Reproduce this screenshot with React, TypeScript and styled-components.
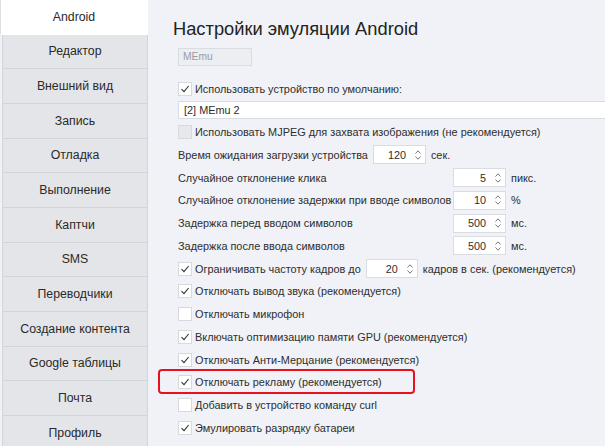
import React from "react";
import styled, { createGlobalStyle } from "styled-components";

const Global = createGlobalStyle`
  html, body { margin: 0; padding: 0; }
  body {
    background: #f0f2f7;
    font-family: "Liberation Sans", Arial, sans-serif;
    color: #2e2e2e;
    overflow: hidden;
  }
`;

const Page = styled.div`
  display: flex;
  width: 605px;
  height: 446px;
  overflow: hidden;
  background: #f0f2f7;
`;

const Sidebar = styled.div`
  width: 148px;
  flex: none;
  display: flex;
  flex-direction: column;
`;

const Tab = styled.div<{ $active?: boolean }>`
  box-sizing: border-box;
  height: 34.67px;
  flex: none;
  display: flex;
  align-items: center;
  justify-content: center;
  font-size: 12.3px;
  color: #2a2a2a;
  margin-left: ${(p) => (p.$active ? "0" : "2px")};
  background: ${(p) => (p.$active ? "#ffffff" : "#e4e5e9")};
  border: 1px solid ${(p) => (p.$active ? "#ffffff" : "#d2d5db")};
  border-left-color: ${(p) => (p.$active ? "#dcdfe4" : "#d2d5db")};
  border-top: none;
`;

const Content = styled.div`
  flex: 1;
  padding: 16px 0 0 30px;
  display: flex;
  flex-direction: column;
  font-size: 10.9px;
`;

const Title = styled.h1`
  margin: 0 0 6px -5px;
  font-weight: normal;
  font-size: 18.3px;
  line-height: 26px;
  color: #222;
`;

const DisabledInput = styled.div`
  box-sizing: border-box;
  width: 74px;
  height: 18px;
  border: 1px solid #d9dce1;
  background: #eceef2;
  color: #9a9ca3;
  font-size: 10.3px;
  line-height: 16px;
  padding-left: 4px;
  margin-bottom: 12px;
`;

const Row = styled.div`
  position: relative;
  height: 22.75px;
  display: flex;
  align-items: center;
  white-space: nowrap;
`;

const Box = styled.span<{ $disabled?: boolean }>`
  box-sizing: border-box;
  width: 14px;
  height: 14px;
  flex: none;
  border: 1px solid #d6d9de;
  background: ${(p) => (p.$disabled ? "#e6e8ec" : "#ffffff")};
  margin-right: 3px;
  display: flex;
  align-items: center;
  justify-content: center;
`;

const Label = styled.span<{ $w?: number }>`
  display: inline-block;
  ${(p) => (p.$w ? `width: ${p.$w}px;` : "")}
`;

const Select = styled.div`
  box-sizing: border-box;
  height: 18px;
  margin-right: -10px;
  margin-bottom: 2px;
  border: 1px solid #d9dce1;
  background: #fff;
  padding-left: 5px;
  line-height: 16px;
`;

const Spin = styled.div<{ $w?: number }>`
  box-sizing: border-box;
  width: ${(p) => p.$w ?? 53}px;
  height: 19px;
  border: 1px solid #d9dce1;
  background: #fff;
  display: flex;
  align-items: center;
  justify-content: flex-end;
  padding-right: 3px;
  margin: 0 5px;
  font-size: 10.8px;
`;

const Arrows = styled.span`
  display: flex;
  flex-direction: column;
  align-items: center;
  margin-left: 8px;
  gap: 2px;
  width: 8px;
`;

const Unit = styled.span``;

const Highlight = styled.span`
  position: absolute;
  left: -20px;
  top: -2px;
  width: 257px;
  height: 25px;
  box-sizing: border-box;
  border: 2px solid #e8121e;
  border-radius: 4px;
  pointer-events: none;
`;

const Check = () => (
  <svg width="10" height="10" viewBox="0 0 10 10">
    <path d="M1.5 5.2 L4 7.6 L8.6 2" fill="none" stroke="#333" strokeWidth="1.1" />
  </svg>
);

const ArrowIcons = () => (
  <Arrows>
    <svg width="6" height="4" viewBox="0 0 6 4">
      <path d="M0.5 3.5 L3 0.8 L5.5 3.5" fill="none" stroke="#777" strokeWidth="1" />
    </svg>
    <svg width="6" height="4" viewBox="0 0 6 4">
      <path d="M0.5 0.5 L3 3.2 L5.5 0.5" fill="none" stroke="#777" strokeWidth="1" />
    </svg>
  </Arrows>
);

const SpinBox = ({ value, w }: { value: string; w?: number }) => (
  <Spin $w={w}>
    {value}
    <ArrowIcons />
  </Spin>
);

const CheckRow = ({
  checked,
  disabled,
  children,
  highlight,
}: {
  checked?: boolean;
  disabled?: boolean;
  children: React.ReactNode;
  highlight?: boolean;
}) => (
  <Row>
    {highlight && <Highlight />}
    <Box $disabled={disabled}>{checked && <Check />}</Box>
    {children}
  </Row>
);

const tabs = [
  "Android",
  "Редактор",
  "Внешний вид",
  "Запись",
  "Отладка",
  "Выполнение",
  "Каптчи",
  "SMS",
  "Переводчики",
  "Создание контента",
  "Google таблицы",
  "Почта",
  "Профиль",
];

export default function App() {
  return (
    <>
      <Global />
      <Page>
        <Sidebar>
          {tabs.map((t, i) => (
            <Tab key={t} $active={i === 0}>
              {t}
            </Tab>
          ))}
        </Sidebar>
        <Content>
          <Title>Настройки эмуляции Android</Title>
          <DisabledInput>MEmu</DisabledInput>
          <CheckRow checked>Использовать устройство по умолчанию:</CheckRow>
          <Select>[2] MEmu 2</Select>
          <CheckRow disabled>Использовать MJPEG для захвата изображения (не рекомендуется)</CheckRow>
          <Row>
            <Label>Время ожидания загрузки устройства</Label>
            <SpinBox value="120" />
            <Unit>сек.</Unit>
          </Row>
          <Row>
            <Label $w={270}>Случайное отклонение клика</Label>
            <SpinBox value="5" />
            <Unit>пикс.</Unit>
          </Row>
          <Row>
            <Label $w={270}>Случайное отклонение задержки при вводе символов</Label>
            <SpinBox value="10" />
            <Unit>%</Unit>
          </Row>
          <Row>
            <Label $w={270}>Задержка перед вводом символов</Label>
            <SpinBox value="500" />
            <Unit>мс.</Unit>
          </Row>
          <Row>
            <Label $w={270}>Задержка после ввода символов</Label>
            <SpinBox value="500" />
            <Unit>мс.</Unit>
          </Row>
          <CheckRow checked>
            Ограничивать частоту кадров до
            <SpinBox value="20" w={52} />
            кадров в сек. (рекомендуется)
          </CheckRow>
          <CheckRow checked>Отключать вывод звука (рекомендуется)</CheckRow>
          <CheckRow>Отключать микрофон</CheckRow>
          <CheckRow checked>Включать оптимизацию памяти GPU (рекомендуется)</CheckRow>
          <CheckRow checked>Отключать Анти-Мерцание (рекомендуется)</CheckRow>
          <CheckRow checked highlight>
            Отключать рекламу (рекомендуется)
          </CheckRow>
          <CheckRow>Добавить в устройство команду curl</CheckRow>
          <CheckRow checked>Эмулировать разрядку батареи</CheckRow>
        </Content>
      </Page>
    </>
  );
}
